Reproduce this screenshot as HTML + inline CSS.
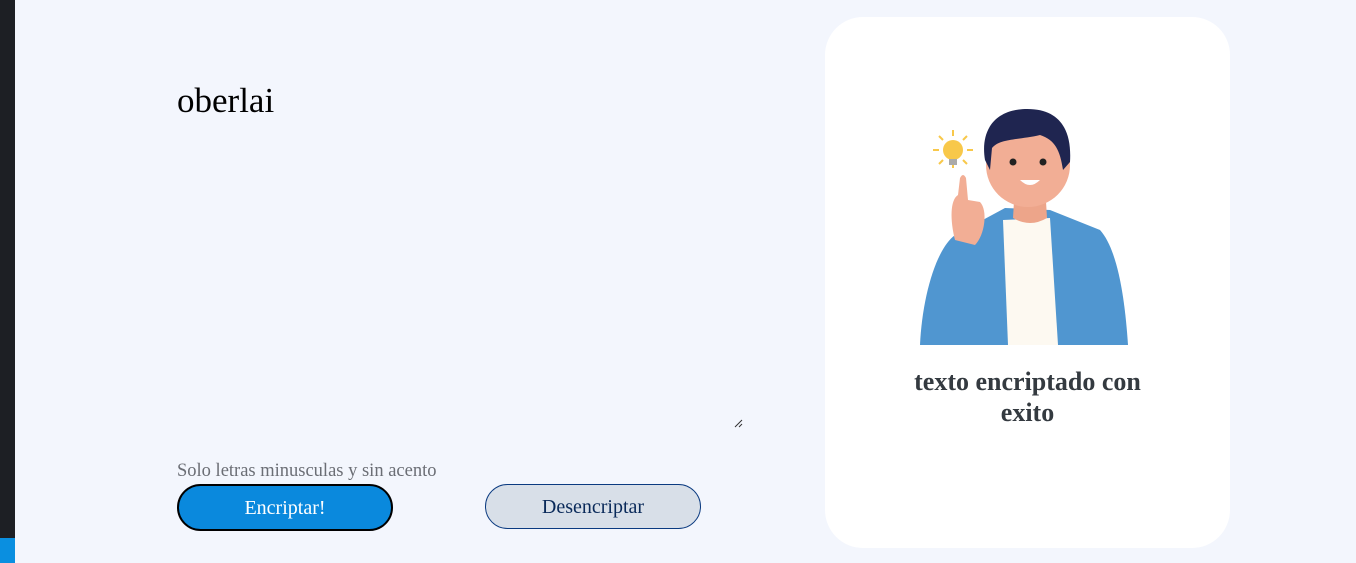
<!DOCTYPE html>
<html><head><style>
body{margin:0;width:1356px;height:563px;background:#f3f6fd;position:relative;overflow:hidden;font-family:"Liberation Serif",serif}
.bar{position:absolute;left:0;top:0;width:15px;height:563px;background:#1d1f24}
.bar2{position:absolute;left:0;top:538px;width:15px;height:25px;background:#0a8fe0}
.t{position:absolute;left:177px;top:81px;font-size:35px;color:#000}
.rz{position:absolute;left:734px;top:419px;width:9px;height:9px}
.hint{position:absolute;left:177px;top:461px;font-size:18.5px;color:#6b6e75}
.b1{position:absolute;left:177px;top:484px;width:212px;height:43px;border:2px solid #000;border-radius:24px;background:#0a89dd;color:#fff;font-size:20px;text-align:center;line-height:45px}
.b2{position:absolute;left:485px;top:484px;width:214px;height:43px;border:1px solid #0a3a80;border-radius:23px;background:#d8dfe8;color:#0a2a5a;font-size:20px;text-align:center;line-height:45px}
.card{position:absolute;left:825px;top:17px;width:405px;height:531px;background:#fff;border-radius:38px}
.msg{position:absolute;left:825px;top:366px;width:405px;text-align:center;font-weight:bold;font-size:26px;line-height:31px;color:#343a40}
</style></head><body>
<div class="bar"></div><div class="bar2"></div>
<div class="t">oberlai</div>
<svg class="rz" viewBox="0 0 9 9"><path d="M1 8L8 1M5 8L8 5" stroke="#333" stroke-width="1"/></svg>
<div class="hint">Solo letras minusculas y sin acento</div>
<div class="b1">Encriptar!</div>
<div class="b2">Desencriptar</div>
<div class="card"></div>
<svg style="position:absolute;left:900px;top:100px" width="250" height="260" viewBox="0 0 250 260">
<path d="M20 245 C22 200 35 150 55 135 L105 108 L150 110 L200 130 C218 150 225 200 228 245 Z" fill="#5096d0"/>
<path d="M103 120 L150 118 L158 245 L108 245 Z" fill="#fdf9f1"/>
<path d="M115 85 L145 85 L147 118 Q130 128 113 118 Z" fill="#eda58a"/>
<ellipse cx="128" cy="65" rx="42" ry="42" fill="#f2ae95"/>
<path d="M85 60 C80 30 95 10 125 9 C160 8 172 30 170 62 L163 70 C160 50 155 40 140 35 C120 40 100 38 92 48 L90 70 Z" fill="#1f2550"/>
<circle cx="113" cy="62" r="3.5" fill="#222"/><circle cx="143" cy="62" r="3.5" fill="#222"/>
<path d="M120 80 Q130 90 140 80 Z" fill="#fff"/>
<path d="M55 140 C50 120 50 100 58 95 L60 78 Q63 72 66 78 L68 100 L80 102 C88 110 85 135 75 145 Z" fill="#f2ae95"/>
<circle cx="53" cy="50" r="10" fill="#f8c84a"/>
<g stroke="#f8c84a" stroke-width="2"><path d="M53 30V36M53 64V68M33 50H39M67 50H73M39 36L43 40M67 36L63 40M39 64L43 60M67 64L63 60"/></g>
<rect x="49" y="59" width="8" height="6" fill="#aaa"/>
</svg>
<div class="msg">texto encriptado con<br>exito</div>
</body></html>
